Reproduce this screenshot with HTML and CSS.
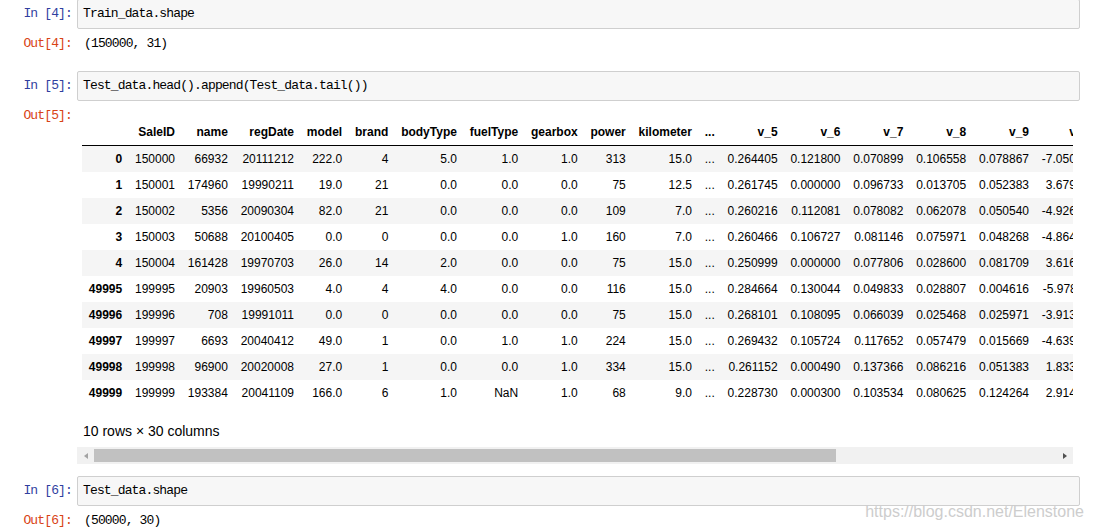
FILE: index.html
```html
<!DOCTYPE html>
<html>
<head>
<meta charset="utf-8">
<link rel="stylesheet" href="styles.css">
</head>
<body>
<div class="nb">
  <div class="cell first">
    <div class="row">
      <div class="prompt in">In&nbsp;[4]:</div>
      <div class="input"><pre class="code">Train_data.shape</pre></div>
    </div>
    <div class="row out-row">
      <div class="prompt out">Out[4]:</div>
      <pre class="out-text">(150000, 31)</pre>
    </div>
  </div>

  <div class="cell">
    <div class="row">
      <div class="prompt in">In&nbsp;[5]:</div>
      <div class="input"><pre class="code">Test_data.head().append(Test_data.tail())</pre></div>
    </div>
    <div class="row out-row">
      <div class="prompt out">Out[5]:</div>
      <div class="html-out">
        <div class="frame">
          <table class="df">
            <thead>
              <tr><th></th><th>SaleID</th><th>name</th><th>regDate</th><th>model</th><th>brand</th><th>bodyType</th><th>fuelType</th><th>gearbox</th><th>power</th><th>kilometer</th><th>...</th><th>v_5</th><th>v_6</th><th>v_7</th><th>v_8</th><th>v_9</th><th>v_10</th><th>v_11</th><th>v_12</th><th>v_13</th><th>v_14</th></tr>
            </thead>
            <tbody>
              <tr><th>0</th><td>150000</td><td>66932</td><td>20111212</td><td>222.0</td><td>4</td><td>5.0</td><td>1.0</td><td>1.0</td><td>313</td><td>15.0</td><td>...</td><td>0.264405</td><td>0.121800</td><td>0.070899</td><td>0.106558</td><td>0.078867</td><td>-7.050969</td><td>-0.854626</td><td>4.800151</td><td>0.620011</td><td>-3.664654</td></tr>
              <tr><th>1</th><td>150001</td><td>174960</td><td>19990211</td><td>19.0</td><td>21</td><td>0.0</td><td>0.0</td><td>0.0</td><td>75</td><td>12.5</td><td>...</td><td>0.261745</td><td>0.000000</td><td>0.096733</td><td>0.013705</td><td>0.052383</td><td>3.679768</td><td>-0.729039</td><td>-3.796107</td><td>-1.541230</td><td>-0.757055</td></tr>
              <tr><th>2</th><td>150002</td><td>5356</td><td>20090304</td><td>82.0</td><td>21</td><td>0.0</td><td>0.0</td><td>0.0</td><td>109</td><td>7.0</td><td>...</td><td>0.260216</td><td>0.112081</td><td>0.078082</td><td>0.062078</td><td>0.050540</td><td>-4.926690</td><td>1.001106</td><td>0.826562</td><td>0.138226</td><td>0.754033</td></tr>
              <tr><th>3</th><td>150003</td><td>50688</td><td>20100405</td><td>0.0</td><td>0</td><td>0.0</td><td>0.0</td><td>1.0</td><td>160</td><td>7.0</td><td>...</td><td>0.260466</td><td>0.106727</td><td>0.081146</td><td>0.075971</td><td>0.048268</td><td>-4.864637</td><td>0.505493</td><td>1.870379</td><td>0.366038</td><td>1.312775</td></tr>
              <tr><th>4</th><td>150004</td><td>161428</td><td>19970703</td><td>26.0</td><td>14</td><td>2.0</td><td>0.0</td><td>0.0</td><td>75</td><td>15.0</td><td>...</td><td>0.250999</td><td>0.000000</td><td>0.077806</td><td>0.028600</td><td>0.081709</td><td>3.616187</td><td>-0.673236</td><td>-3.197685</td><td>-0.025678</td><td>-0.101290</td></tr>
              <tr><th>49995</th><td>199995</td><td>20903</td><td>19960503</td><td>4.0</td><td>4</td><td>4.0</td><td>0.0</td><td>0.0</td><td>116</td><td>15.0</td><td>...</td><td>0.284664</td><td>0.130044</td><td>0.049833</td><td>0.028807</td><td>0.004616</td><td>-5.978511</td><td>1.303174</td><td>-1.207191</td><td>-1.981240</td><td>-0.357695</td></tr>
              <tr><th>49996</th><td>199996</td><td>708</td><td>19991011</td><td>0.0</td><td>0</td><td>0.0</td><td>0.0</td><td>0.0</td><td>75</td><td>15.0</td><td>...</td><td>0.268101</td><td>0.108095</td><td>0.066039</td><td>0.025468</td><td>0.025971</td><td>-3.913825</td><td>1.759524</td><td>-2.075658</td><td>-1.154847</td><td>0.169073</td></tr>
              <tr><th>49997</th><td>199997</td><td>6693</td><td>20040412</td><td>49.0</td><td>1</td><td>0.0</td><td>1.0</td><td>1.0</td><td>224</td><td>15.0</td><td>...</td><td>0.269432</td><td>0.105724</td><td>0.117652</td><td>0.057479</td><td>0.015669</td><td>-4.639065</td><td>0.654713</td><td>1.137756</td><td>-1.390531</td><td>0.254420</td></tr>
              <tr><th>49998</th><td>199998</td><td>96900</td><td>20020008</td><td>27.0</td><td>1</td><td>0.0</td><td>0.0</td><td>1.0</td><td>334</td><td>15.0</td><td>...</td><td>0.261152</td><td>0.000490</td><td>0.137366</td><td>0.086216</td><td>0.051383</td><td>1.833504</td><td>-2.828687</td><td>2.465630</td><td>-0.911682</td><td>-2.057353</td></tr>
              <tr><th>49999</th><td>199999</td><td>193384</td><td>20041109</td><td>166.0</td><td>6</td><td>1.0</td><td>NaN</td><td>1.0</td><td>68</td><td>9.0</td><td>...</td><td>0.228730</td><td>0.000300</td><td>0.103534</td><td>0.080625</td><td>0.124264</td><td>2.914571</td><td>-1.135270</td><td>0.547628</td><td>2.094057</td><td>-1.552150</td></tr>
            </tbody>
          </table>
          <p class="shape">10 rows × 30 columns</p>
        </div>
        <div class="hscroll">
          <div class="sb-btn"><span class="arrow left"></span></div>
          <div class="sb-track"><div class="sb-thumb"></div></div>
          <div class="sb-btn"><span class="arrow right"></span></div>
        </div>
      </div>
    </div>
  </div>

  <div class="cell">
    <div class="row">
      <div class="prompt in">In&nbsp;[6]:</div>
      <div class="input"><pre class="code">Test_data.shape</pre></div>
    </div>
    <div class="row out-row">
      <div class="prompt out">Out[6]:</div>
      <pre class="out-text">(50000, 30)</pre>
    </div>
  </div>
</div>
<div class="watermark">https://blog.csdn.net/Elenstone</div>
</body>
</html>
```

FILE: styles.css
```css
html, body {
  margin: 0;
  padding: 0;
  background: #ffffff;
  overflow: hidden;
}

body {
  width: 1094px;
  height: 532px;
  position: relative;
  font-family: "Liberation Sans", Arial, sans-serif;
  color: #000;
}

.nb {
  display: flex;
  flex-direction: column;
  width: 1080px;
}

.cell {
  display: flex;
  flex-direction: column;
  margin-top: 12px;
}

.cell.first {
  margin-top: -1px;
}

.row {
  display: flex;
  align-items: flex-start;
}

.prompt {
  width: 77px;
  flex: 0 0 77px;
  box-sizing: border-box;
  padding-right: 5px;
  text-align: right;
  font-family: "Liberation Mono", "Courier New", monospace;
  font-size: 13px;
  letter-spacing: -0.86px;
  line-height: 18px;
  white-space: nowrap;
}

.prompt.in {
  color: #303f9f;
  padding-top: 6px;
}

.prompt.out {
  color: #d84315;
}

.input {
  flex: 1;
  height: 30px;
  box-sizing: border-box;
  border: 1px solid #cfcfcf;
  border-radius: 2px;
  background: #f7f7f7;
  padding: 5px 5px;
}

.code, .out-text {
  margin: 0;
  font-family: "Liberation Mono", "Courier New", monospace;
  font-size: 13px;
  letter-spacing: -0.86px;
  line-height: 18px;
  color: #000;
  white-space: pre;
}

.out-row {
  padding-top: 6px;
}

.out-text {
  padding-left: 7px;
  padding-bottom: 6px;
}

.html-out {
  width: 996px;
  flex: 0 0 996px;
  display: flex;
  flex-direction: column;
  padding-top: 12px;
}

.frame {
  overflow: hidden;
  padding-left: 5px;
}

.df {
  border-collapse: collapse;
  border-spacing: 0;
  font-size: 12px;
  line-height: normal;
  white-space: nowrap;
}

.df thead {
  border-bottom: 1px solid #000;
}

.df th, .df td {
  padding: 6px 6px 6px 6.8px;
  text-align: right;
  vertical-align: middle;
  border: none;
}

.df th {
  font-weight: bold;
}

.df tbody tr:nth-child(odd) {
  background: #f5f5f5;
}

.shape {
  margin: 15px 0 6px 0;
  font-size: 14px;
  line-height: 20px;
  padding-left: 1px;
}

.hscroll {
  display: flex;
  height: 17px;
  background: #f1f1f1;
}

.sb-btn {
  width: 17px;
  flex: 0 0 17px;
  display: flex;
  align-items: center;
  justify-content: center;
}

.sb-track {
  flex: 1;
  display: flex;
  align-items: center;
}

.sb-thumb {
  width: 742px;
  height: 13px;
  background: #c1c1c1;
}

.arrow {
  width: 0;
  height: 0;
  border-top: 3.5px solid transparent;
  border-bottom: 3.5px solid transparent;
}

.arrow.left {
  border-right: 4px solid #a3a3a3;
}

.arrow.right {
  border-left: 4px solid #505050;
}

.watermark {
  position: absolute;
  right: 10px;
  top: 502px;
  font-family: "Liberation Sans", Arial, sans-serif;
  font-size: 16px;
  line-height: 20px;
  color: #cdcdcd;
}
```
